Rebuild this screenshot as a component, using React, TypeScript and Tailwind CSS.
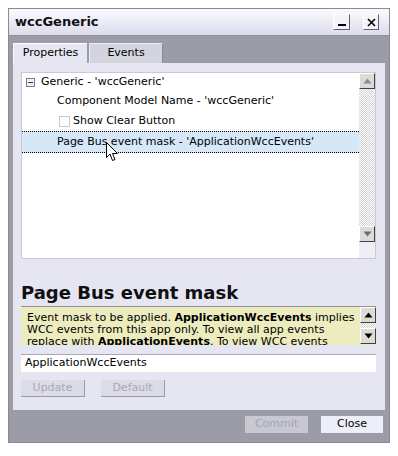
import React from 'react';

const font = { fontFamily: '"DejaVu Sans", Verdana, sans-serif' };

function ScrollBtn({ dir, dark }: { dir: 'up' | 'down'; dark?: boolean }) {
  return (
    <div className="w-[16px] h-[16px] bg-[#dcdcd4] border border-t-white border-l-white border-r-[#404040] border-b-[#404040] flex items-center justify-center">
      <svg width="9" height="6" viewBox="0 0 9 6">
        {dir === 'up' ? (
          <path d="M4.5 0.5 L8.5 5.5 L0.5 5.5 Z" fill={dark ? '#000' : '#8a8aa8'} />
        ) : (
          <path d="M0.5 0.5 L8.5 0.5 L4.5 5.5 Z" fill={dark ? '#000' : '#6a6a90'} />
        )}
      </svg>
    </div>
  );
}

function Cursor() {
  return (
    <svg className="absolute left-[106px] top-[142px]" width="13" height="20" viewBox="0 0 13 20">
      <path d="M0.5 0.5 L0.5 15.5 L4 12 L6.5 18.5 L9 17.5 L6.5 11.5 L11.5 11.5 Z" fill="#fff" stroke="#000" strokeWidth="1" strokeLinejoin="miter" />
    </svg>
  );
}

export default function App() {
  return (
    <div className="relative w-[398px] h-[456px] bg-white pt-[8px] pl-[8px] text-[11px] text-black" style={font}>
      <div className="w-[382px] h-[435px] bg-[#9c9ca6] border border-[#8a8a94] flex flex-col">
        {/* title bar */}
        <div className="h-[27px] shrink-0 bg-gradient-to-b from-[#fbfbfe] to-[#dcdcec] border-b border-[#9090a0] flex items-center pl-[6px] pr-[10px]">
          <span className="font-bold text-[13px] text-[#101018]">wccGeneric</span>
          <div className="ml-auto flex items-center gap-[13px]">
            <div className="w-[17px] h-[16px] bg-[#f4f4f8] border border-t-white border-l-white border-r-[#606070] border-b-[#606070] flex items-end justify-center pb-[3px]">
              <div className="w-[8px] h-[2px] bg-black" />
            </div>
            <div className="w-[16px] h-[16px] bg-[#f4f4f8] border border-t-white border-l-white border-r-[#606070] border-b-[#606070] flex items-center justify-center">
              <svg width="9" height="9" viewBox="0 0 9 9">
                <path d="M1 1 L8 8 M8 1 L1 8" stroke="#000" strokeWidth="1.6" />
              </svg>
            </div>
          </div>
        </div>

        {/* tabs */}
        <div className="flex pl-[4px] pt-[7px] h-[27px] shrink-0 items-end">
          <div className="w-[74px] h-[20px] bg-[#e6e6f2] border-t border-l border-white flex items-center justify-center">
            Properties
          </div>
          <div className="ml-[2px] w-[74px] h-[20px] bg-[#d4d4de] border-t border-l border-r border-t-[#ececf4] border-l-[#ececf4] border-r-[#8a8a94] flex items-center justify-center">
            Events
          </div>
        </div>

        {/* panel */}
        <div className="mx-[4px] h-[347px] shrink-0 bg-[#e6e6f2] pl-[8px] pr-[9px] pt-[9px] flex flex-col">
          {/* tree box */}
          <div className="relative h-[187px] shrink-0 bg-white border border-[#c8c8d8] flex">
            <div className="flex-1">
              <div className="h-[18px] flex items-center pl-[4px]">
                <div className="w-[9px] h-[9px] border border-[#7a7a90] bg-[#f0f0f4] flex items-center justify-center mr-[6px]">
                  <div className="w-[5px] h-[1px] bg-[#303050]" />
                </div>
                <span>Generic - 'wccGeneric'</span>
              </div>
              <div className="h-[20px] flex items-center pl-[35px]">Component Model Name - 'wccGeneric'</div>
              <div className="h-[20px] flex items-center pl-[37px]">
                <div className="w-[11px] h-[11px] border border-[#c8c8d0] bg-white mr-[3px]" />
                <span>Show Clear Button</span>
              </div>
              <div className="h-[22px] flex items-center pl-[35px] bg-[#d6e8f8] border-y border-dotted border-black">
                Page Bus event mask - 'ApplicationWccEvents'
              </div>
            </div>
            <div className="w-[16px] flex flex-col">
              <ScrollBtn dir="up" />
              <div className="h-[137px] bg-[repeating-conic-gradient(#d4d4d4_0%_25%,#ffffff_0%_50%)] bg-[length:2px_2px]" />
              <ScrollBtn dir="down" />
              <div className="flex-1 bg-[#eeeef6]" />
            </div>
          </div>

          {/* heading */}
          <div className="mt-[24px] h-[18px] flex items-center font-bold text-[18px] text-[#101010] whitespace-nowrap">Page Bus event mask</div>

          {/* description */}
          <div className="mt-[5px] h-[39px] shrink-0 bg-[#ececbe] border-t border-[#909098] flex overflow-hidden">
            <div className="flex-1 pl-[6px] pt-[5px] leading-[12px] overflow-hidden whitespace-nowrap">
              Event mask to be applied. <b>ApplicationWccEvents</b> implies
              <br />
              WCC events from this app only. To view all app events
              <br />
              replace with <b>ApplicationEvents</b>. To view WCC events
            </div>
            <div className="w-[16px] flex flex-col">
              <ScrollBtn dir="up" dark />
              <div className="h-[5px] bg-[repeating-conic-gradient(#d4d4d4_0%_25%,#ffffff_0%_50%)] bg-[length:2px_2px]" />
              <ScrollBtn dir="down" dark />
            </div>
          </div>

          {/* input */}
          <div className="mt-[9px] h-[18px] shrink-0 bg-white border-t border-[#a8a8b8] flex items-center pl-[4px]">
            ApplicationWccEvents
          </div>

          {/* buttons */}
          <div className="mt-[8px] flex gap-[16px]">
            <div className="w-[64px] h-[17px] bg-[#dcdce6] border-r border-b border-[#9a9aa8] flex items-center justify-center text-[#a8a8b8]">
              Update
            </div>
            <div className="w-[64px] h-[17px] bg-[#dcdce6] border-r border-b border-[#9a9aa8] flex items-center justify-center text-[#a8a8b8]">
              Default
            </div>
          </div>
        </div>

        {/* footer */}
        <div className="flex justify-end gap-[13px] pr-[6px] pt-[6px]">
          <div className="w-[63px] h-[17px] bg-[#c8c8d2] flex items-center justify-center text-[#a4a4b4]">Commit</div>
          <div className="w-[62px] h-[17px] bg-[#eeeef8] flex items-center justify-center text-black">Close</div>
        </div>
      </div>
      <Cursor />
    </div>
  );
}
